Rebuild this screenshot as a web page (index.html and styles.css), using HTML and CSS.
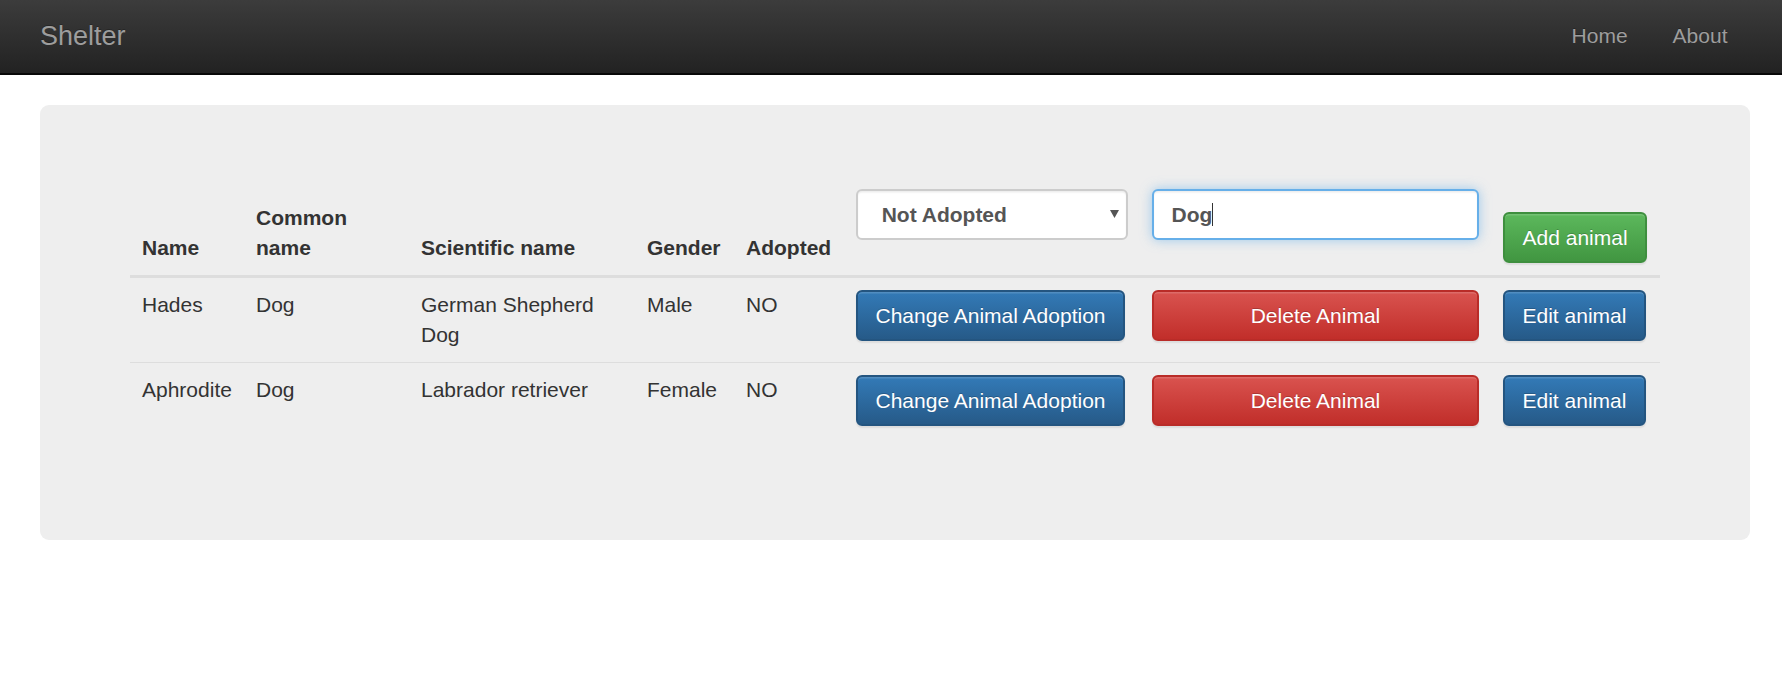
FILE: index.html
```html
<!DOCTYPE html>
<html lang="en">
<head>
<meta charset="utf-8">
<title>Shelter</title>
<link rel="stylesheet" href="styles.css">
</head>
<body>
<nav class="navbar">
  <a class="brand" href="#">Shelter</a>
  <ul class="nav">
    <li><a href="#">Home</a></li>
    <li><a href="#">About</a></li>
  </ul>
</nav>
<main class="container">
  <section class="jumbotron">
    <table class="animals">
      <colgroup>
        <col class="c-name">
        <col class="c-common">
        <col class="c-sci">
        <col class="c-gender">
        <col class="c-adopted">
        <col class="c-adopt">
        <col class="c-delete">
        <col class="c-edit">
      </colgroup>
      <thead>
        <tr>
          <th>Name</th>
          <th>Common name</th>
          <th>Scientific name</th>
          <th>Gender</th>
          <th>Adopted</th>
          <th>
            <div class="form-group">
              <div class="form-control select">Not Adopted
                <svg class="select-caret" viewBox="0 0 9 8" width="9" height="8"><polygon points="0,0 9,0 4.5,8" fill="#555"/></svg>
              </div>
            </div>
          </th>
          <th>
            <div class="form-group">
              <div class="form-control input-focus">Dog<span class="cursor"></span></div>
            </div>
          </th>
          <th><button class="btn btn-success">Add animal</button></th>
        </tr>
      </thead>
      <tbody>
        <tr>
          <td>Hades</td>
          <td>Dog</td>
          <td>German Shepherd Dog</td>
          <td>Male</td>
          <td>NO</td>
          <td><button class="btn btn-primary">Change Animal Adoption</button></td>
          <td><button class="btn btn-danger btn-block">Delete Animal</button></td>
          <td><button class="btn btn-primary">Edit animal</button></td>
        </tr>
        <tr>
          <td>Aphrodite</td>
          <td>Dog</td>
          <td>Labrador retriever</td>
          <td>Female</td>
          <td>NO</td>
          <td><button class="btn btn-primary">Change Animal Adoption</button></td>
          <td><button class="btn btn-danger btn-block">Delete Animal</button></td>
          <td><button class="btn btn-primary">Edit animal</button></td>
        </tr>
      </tbody>
    </table>
  </section>
</main>
</body>
</html>
```
FILE: styles.css
```css
* { box-sizing: border-box; }
html, body { margin: 0; padding: 0; }
body {
  font-family: "Liberation Sans", Arial, Helvetica, sans-serif;
  font-size: 21px;
  line-height: 30px;
  color: #333;
  background: #fff;
}

/* navbar */
.navbar {
  display: flex;
  justify-content: space-between;
  align-items: flex-start;
  height: 75px;
  padding: 0 32px 0 40px;
  background: linear-gradient(to bottom, #3c3c3c 0, #222 100%);
  border-bottom: 2px solid #080808;
}
.brand {
  display: block;
  padding-top: 21px;
  font-size: 27px;
  line-height: 30px;
  color: #9d9d9d;
  text-decoration: none;
  text-shadow: 0 -1px 0 rgba(0, 0, 0, .25);
}
.nav {
  display: flex;
  margin: 0;
  padding: 0;
  list-style: none;
}
.nav a {
  display: block;
  padding: 21px 22.5px 0;
  line-height: 30px;
  color: #9d9d9d;
  text-decoration: none;
  text-shadow: 0 -1px 0 rgba(0, 0, 0, .25);
}

/* layout */
.container { padding: 30px 32px 0 40px; }
.jumbotron {
  background: #eee;
  border-radius: 9px;
  padding: 72px 90px;
}

/* table */
.animals {
  width: 100%;
  table-layout: fixed;
  border-collapse: separate;
  border-spacing: 0;
  margin-bottom: 30px;
}
.c-name { width: 114px; }
.c-common { width: 165px; }
.c-sci { width: 226px; }
.c-gender { width: 99px; }
.c-adopted { width: 110px; }
.c-adopt { width: 296px; }
.c-delete { width: 351px; }
.c-edit { width: 169px; }

.animals th,
.animals td {
  padding: 12px;
  text-align: left;
}
.animals th {
  vertical-align: bottom;
  font-weight: bold;
  border-bottom: 3px solid #ddd;
}
.animals td { vertical-align: top; }
.animals tbody tr + tr td { border-top: 1px solid #ddd; }

/* form controls */
.form-group { margin-bottom: 23px; }
.form-control {
  display: block;
  width: 100%;
  height: 51px;
  padding: 8.5px 17.5px;
  border: 2px solid #ccc;
  border-radius: 6px;
  background: #fff;
  color: #555;
  line-height: 30px;
  box-shadow: inset 0 1.5px 1.5px rgba(0, 0, 0, .075);
  white-space: nowrap;
}
.select {
  position: relative;
  padding-left: 23.7px;
}
.select-caret {
  position: absolute;
  right: 7px;
  top: 19px;
}
.input-focus {
  border-color: #66afe9;
  box-shadow: inset 0 1.5px 1.5px rgba(0, 0, 0, .075), 0 0 12px rgba(102, 175, 233, .6);
}
.cursor {
  display: inline-block;
  width: 1px;
  height: 23px;
  margin-left: 0;
  vertical-align: -4px;
  background: #333;
}

/* buttons */
.btn {
  display: inline-block;
  vertical-align: top;
  margin: 0;
  padding: 8.5px 17.5px;
  font-family: "Liberation Sans", Arial, Helvetica, sans-serif;
  font-size: 21px;
  font-weight: normal;
  line-height: 30px;
  color: #fff;
  text-align: center;
  white-space: nowrap;
  border: 2px solid transparent;
  border-radius: 6px;
  text-shadow: 0 -1px 0 rgba(0, 0, 0, .2);
  box-shadow: inset 0 1.5px 0 rgba(255, 255, 255, .15), 0 1.5px 1.5px rgba(0, 0, 0, .075);
  cursor: pointer;
}
.btn-block { display: block; width: 100%; }
.btn-primary {
  background: linear-gradient(to bottom, #337ab7 0, #265a88 100%);
  border-color: #245580;
}
.btn-danger {
  background: linear-gradient(to bottom, #d9534f 0, #c12e2a 100%);
  border-color: #b92c28;
}
.btn-success {
  background: linear-gradient(to bottom, #5cb85c 0, #419641 100%);
  border-color: #3e8f3e;
}
```
